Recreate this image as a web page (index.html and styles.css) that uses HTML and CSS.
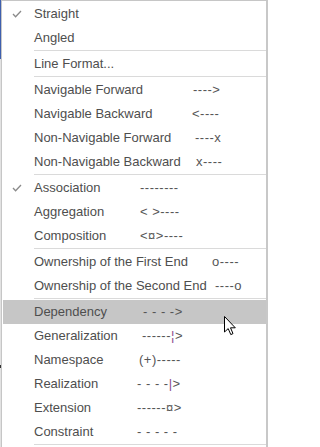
FILE: index.html
```html
<!DOCTYPE html>
<html>
<head>
<meta charset="utf-8">
<link rel="stylesheet" href="styles.css">
</head>
<body>
<div class="page">
  <div class="edge"></div>
  <div class="menu">
    <div class="row"><span class="check"><svg viewBox="0 0 10 8" width="10" height="8"><polyline points="1,4 3.6,6.8 9,1" fill="none" stroke="#8a8a8a" stroke-width="1.3"/></svg></span><span class="label">Straight</span></div>
    <div class="row"><span class="label">Angled</span></div>
    <div class="sep"></div>
    <div class="row"><span class="label">Line Format...</span></div>
    <div class="sep"></div>
    <div class="group g-nav">
      <div class="row"><span class="label">Navigable Forward</span><span class="key">----&gt;</span></div>
      <div class="row"><span class="label">Navigable Backward</span><span class="key n-1">&lt;----</span></div>
      <div class="row"><span class="label">Non-Navigable Forward</span><span class="key n2">----x</span></div>
      <div class="row"><span class="label">Non-Navigable Backward</span><span class="key n3">x----</span></div>
    </div>
    <div class="sep"></div>
    <div class="group g-assoc">
      <div class="row"><span class="check"><svg viewBox="0 0 10 8" width="10" height="8"><polyline points="1,4 3.6,6.8 9,1" fill="none" stroke="#8a8a8a" stroke-width="1.3"/></svg></span><span class="label">Association</span><span class="key">--------</span></div>
      <div class="row"><span class="label">Aggregation</span><span class="key">&lt; &gt;----</span></div>
      <div class="row"><span class="label">Composition</span><span class="key">&lt;¤&gt;----</span></div>
    </div>
    <div class="sep"></div>
    <div class="group g-own">
      <div class="row"><span class="label">Ownership of the First End</span><span class="key">o----</span></div>
      <div class="row"><span class="label">Ownership of the Second End</span><span class="key n3">----o</span></div>
    </div>
    <div class="sep"></div>
    <div class="group g-dep">
      <div class="row active"><span class="label">Dependency</span><span class="key n6">- - - -&gt;</span></div>
      <div class="row"><span class="label">Generalization</span><span class="key n5">------<span class="bar">¦</span>&gt;</span></div>
      <div class="row"><span class="label">Namespace</span><span class="key n2">(+)-----</span></div>
      <div class="row"><span class="label">Realization</span><span class="key">- - - -<span class="bar">|</span>&gt;</span></div>
      <div class="row"><span class="label">Extension</span><span class="key">------¤&gt;</span></div>
      <div class="row"><span class="label">Constraint</span><span class="key">- - - - -</span></div>
    </div>
    <div class="sep"></div>
  </div>
  <svg class="cursor" viewBox="0 0 13 20" width="13" height="20"><path d="M0.5,0.5 L0.5,16 L4.2,12.6 L6.8,18.6 L9,17.6 L6.5,11.8 L11.3,11.8 Z" fill="#fff" stroke="#000" stroke-width="1" stroke-linejoin="miter"/></svg>
</div>
</body>
</html>
```

FILE: styles.css
```css
html, body {
  margin: 0;
  padding: 0;
  background: #fff;
}
.page {
  position: relative;
  display: flex;
  width: 268px;
  height: 447px;
  overflow: hidden;
  font-family: "Liberation Sans", Arial, sans-serif;
}
.edge {
  width: 1px;
  flex: none;
  background: linear-gradient(#3e5fae 0 59px, #e2e2e2 59px 365px, #333 365px 368px, #e2e2e2 368px);
}
.menu {
  width: 263px;
  flex: none;
  border-top: 1px solid #c6c6c6;
  border-left: 1px solid #c6c6c6;
  border-right: 2px solid #c8c8c8;
  padding: 1px 0 0 1px;
  background: #fff;
}
.row {
  position: relative;
  display: grid;
  grid-template-columns: var(--lw, auto) auto;
  justify-content: start;
  height: 24px;
  line-height: 24px;
  padding-left: 31px;
  font-size: 13px;
  color: #4e4e4e;
  white-space: nowrap;
}
.row.active {
  background: #c6c6c6;
}
.label {
  white-space: nowrap;
}
.check {
  position: absolute;
  left: 9px;
  top: 8px;
  width: 10px;
  height: 8px;
  line-height: 0;
}
.key {
  letter-spacing: 0.5px;
  color: #555;
}
.bar {
  color: #8a4d8e;
}
.g-nav { --lw: 159px; }
.g-assoc { --lw: 106px; }
.g-own { --lw: 178px; }
.g-dep { --lw: 103px; }
.n-1 { margin-left: -1px; }
.n2 { margin-left: 2px; }
.n3 { margin-left: 3px; }
.n5 { margin-left: 5px; }
.n6 { margin-left: 6px; }
.sep {
  height: 1px;
  margin-left: 31px;
  border-top: 1px solid #dadada;
}
.cursor {
  position: absolute;
  left: 224px;
  top: 316px;
}
```
